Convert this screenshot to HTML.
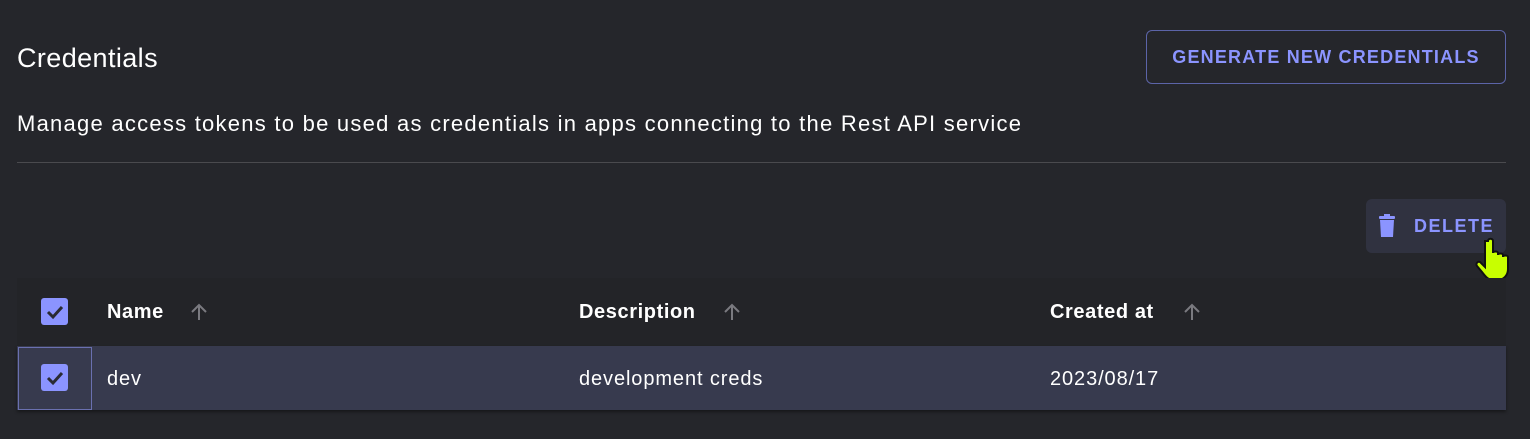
<!DOCTYPE html><html><head><style>
body{margin:0;width:1530px;height:439px;background:#25262b;font-family:"Liberation Sans",sans-serif;color:#fff;position:relative;overflow:hidden}
.a{position:absolute}
.cb{position:absolute;width:27px;height:27px;background:#8b94ff;border-radius:3px}
.cb svg{position:absolute;left:0;top:0}
.th{font-weight:bold;font-size:20px;top:301px;letter-spacing:0.6px}
.td{font-size:20px;top:368px;letter-spacing:0.9px}
</style></head><body>
<div class="a" style="left:17px;top:43px;font-size:27px;letter-spacing:0.4px">Credentials</div>
<div class="a" style="left:1146px;top:30px;width:358px;height:52px;border:1px solid #5c64a8;border-radius:6px;color:#8b94ff;font-weight:bold;font-size:18px;letter-spacing:1.2px;text-align:center;line-height:53px">GENERATE NEW CREDENTIALS</div>
<div class="a" style="left:17px;top:111px;font-size:22px;letter-spacing:1.25px">Manage access tokens to be used as credentials in apps connecting to the Rest API service</div>
<div class="a" style="left:17px;top:162px;width:1489px;height:1px;background:#4a4a4e"></div>
<div class="a" style="left:1366px;top:199px;width:140px;height:54px;background:#303240;border-radius:6px"></div>
<svg class="a" style="left:1378px;top:214px" width="18" height="24" viewBox="0 0 18 24"><rect x="1" y="2" width="16" height="3" rx="1" fill="#8b94ff"/><rect x="6" y="0" width="6" height="3" fill="#8b94ff"/><path d="M2 6h14l-1 17H3z" fill="#8b94ff"/></svg>
<div class="a" style="left:1414px;top:216px;color:#8b94ff;font-weight:bold;font-size:18px;letter-spacing:1.5px">DELETE</div>
<svg class="a" style="left:1474px;top:237px" width="36" height="46" viewBox="0 0 36 46"><path d="M14 4c0-3 5-3 5 0v12c0-2 5-2 5 0v2c0-2 5-2 5 0v2c0-2 5-2 5 0v12c0 6-4 11-11 11h-4c-5 0-8-4-11-8l-5-6c-2-3 2-6 4-3l4 4V4z" fill="#c8ff00" stroke="#111" stroke-width="2"/></svg>
<div class="a" style="left:17px;top:278px;width:1489px;height:68px;background:#232428"></div>
<div class="a" style="left:17px;top:346px;width:1489px;height:64px;background:#373a4e;box-shadow:0 2px 3px rgba(0,0,0,.4)"></div>
<div class="a" style="left:18px;top:347px;width:72px;height:61px;border:1px solid #6a70b0"></div>
<div class="cb" style="left:41px;top:298px"><svg width="27" height="27"><path d="M7 14l5 5 9-10" stroke="#2a2b33" stroke-width="3" fill="none"/></svg></div>
<div class="cb" style="left:41px;top:364px"><svg width="27" height="27"><path d="M7 14l5 5 9-10" stroke="#2a2b33" stroke-width="3" fill="none"/></svg></div>
<div class="a th" style="left:107px">Name</div>
<div class="a th" style="left:579px">Description</div>
<div class="a th" style="left:1050px">Created at</div>
<svg class="a" style="left:189px;top:302px" width="20" height="20"><path d="M10 18V3M3 10l7-7 7 7" stroke="#7a7a80" stroke-width="2" fill="none"/></svg>
<svg class="a" style="left:722px;top:302px" width="20" height="20"><path d="M10 18V3M3 10l7-7 7 7" stroke="#7a7a80" stroke-width="2" fill="none"/></svg>
<svg class="a" style="left:1182px;top:302px" width="20" height="20"><path d="M10 18V3M3 10l7-7 7 7" stroke="#7a7a80" stroke-width="2" fill="none"/></svg>
<div class="a td" style="left:107px">dev</div>
<div class="a td" style="left:579px">development creds</div>
<div class="a td" style="left:1050px">2023/08/17</div>
</body></html>
